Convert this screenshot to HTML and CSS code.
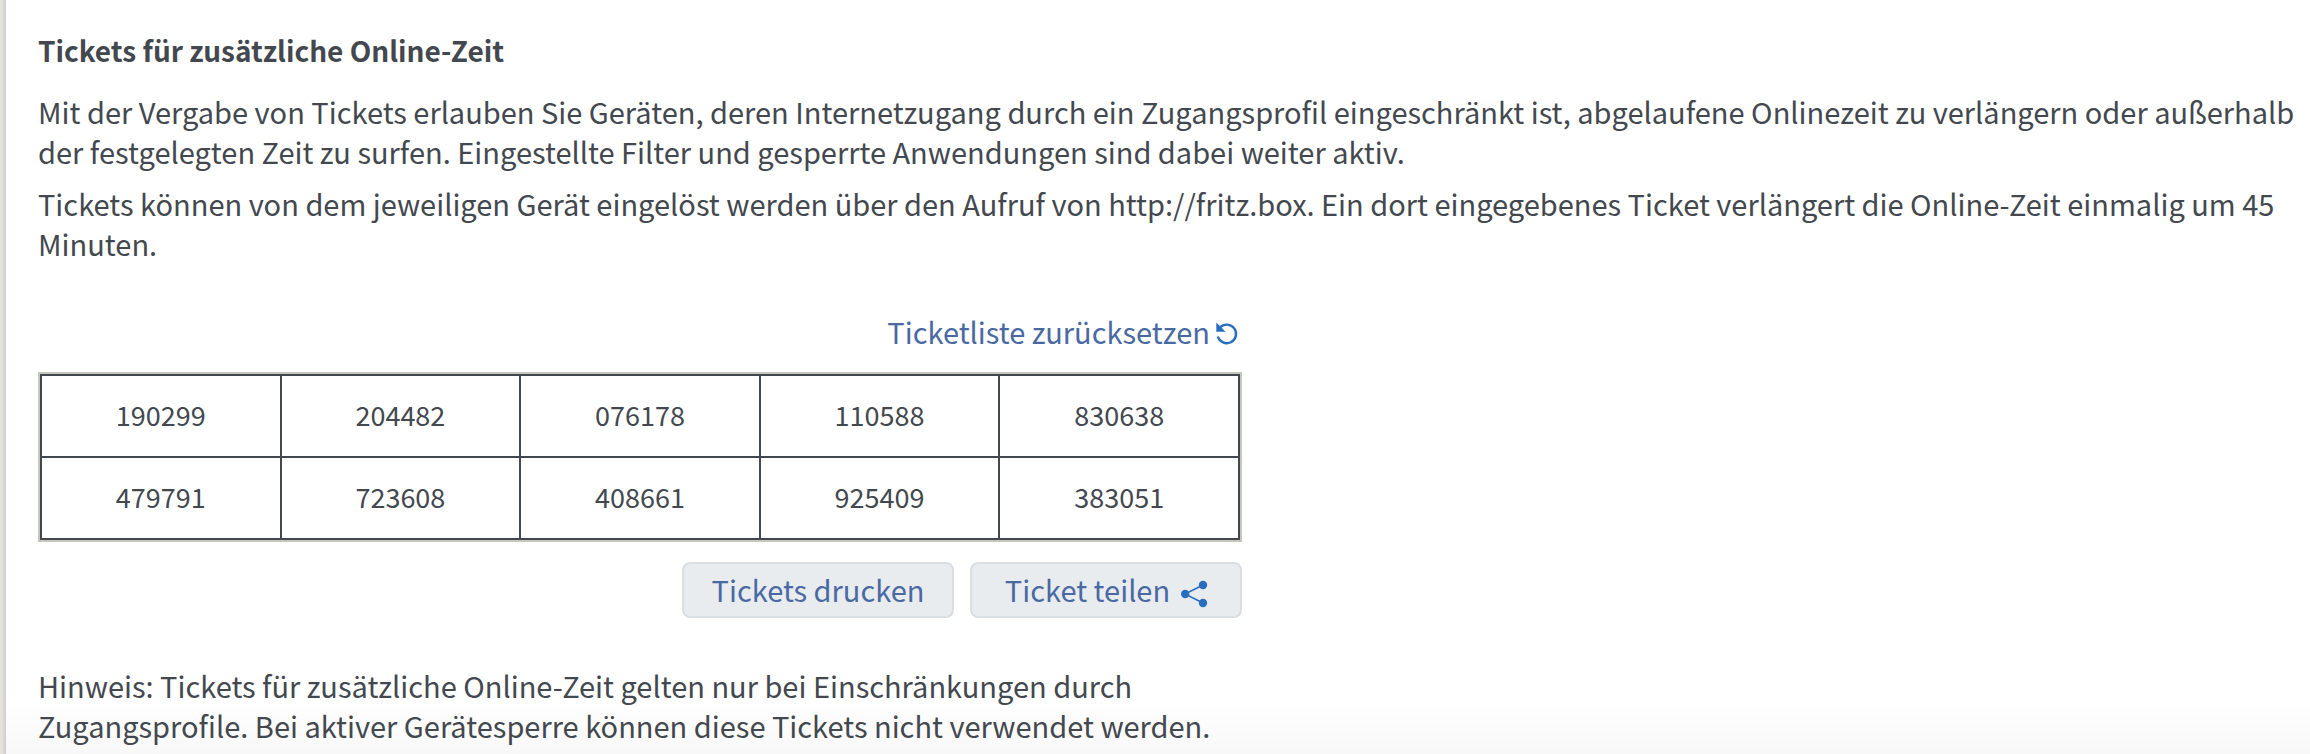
FILE: index.html
```html
<!DOCTYPE html>
<html lang="de">
<head>
<meta charset="utf-8">
<title>Tickets für zusätzliche Online-Zeit</title>
<link rel="stylesheet" href="styles.css">
</head>
<body>
<main class="panel">
  <h1 class="title">Tickets für zusätzliche Online-Zeit</h1>
  <p class="text">Mit der Vergabe von Tickets erlauben Sie Geräten, deren Internetzugang durch ein Zugangsprofil eingeschränkt ist, abgelaufene Onlinezeit zu verlängern oder außerhalb der festgelegten Zeit zu surfen. Eingestellte Filter und gesperrte Anwendungen sind dabei weiter aktiv.</p>
  <p class="text">Tickets können von dem jeweiligen Gerät eingelöst werden über den Aufruf von http://fritz.box. Ein dort eingegebenes Ticket verlängert die Online-Zeit einmalig um 45 Minuten.</p>
  <section class="tickets">
    <a class="reset" href="#">Ticketliste zurücksetzen<svg class="reset-icon" viewBox="0 0 22 22" aria-hidden="true"><path d="M4 5.500A9.300 9.300 0 1 1 1.800 14.500" fill="none" stroke="currentColor" stroke-width="2.400"/><path d="M0.300 0.500V9.800H9.600Z" fill="currentColor"/></svg></a>
    <div class="frame">
      <table class="list">
        <tr><td>190299</td><td>204482</td><td>076178</td><td>110588</td><td>830638</td></tr>
        <tr><td>479791</td><td>723608</td><td>408661</td><td>925409</td><td>383051</td></tr>
      </table>
    </div>
    <div class="actions">
      <button class="btn" type="button">Tickets drucken</button>
      <button class="btn" type="button">Ticket teilen<svg class="share-icon" viewBox="0 0 26 26" aria-hidden="true"><path d="M22 4L4 13l18 9" fill="none" stroke="currentColor" stroke-width="1.500"/><circle cx="22" cy="4" r="4.200"/><circle cx="4.200" cy="13" r="4.200"/><circle cx="22" cy="22" r="4.200"/></svg></button>
    </div>
    <p class="hint">Hinweis: Tickets für zusätzliche Online-Zeit gelten nur bei Einschränkungen durch Zugangsprofile. Bei aktiver Gerätesperre können diese Tickets nicht verwendet werden.</p>
  </section>
</main>
</body>
</html>
```
FILE: styles.css
```css
* { box-sizing: border-box; }
body {
  display: flex;
  min-height: 100vh;
  margin: 0;
  color: #43484f;
  font: 29px/40px "Source Sans Pro", "Noto Sans CJK SC", sans-serif;
}
body::before {
  content: "";
  flex: none;
  width: 6px;
  background: linear-gradient(90deg, #e4e2dd 30%, #cfcdc8);
}
.panel {
  flex: 1;
  padding: 30px 12px 0 32px;
  background: linear-gradient(0deg, #f8f8f8, #fff 56px);
}
.title { margin: 0 0 21px; font-size: 28px; font-weight: 700; }
.text { margin: 0 0 12px; }
.tickets { max-width: 1204px; margin-top: 48px; }
.reset { display: flex; justify-content: flex-end; align-items: center; padding-right: 4px; color: #4a69a2; text-decoration: none; }
.reset-icon { width: 22px; height: 22px; margin: 4px 0 0 6px; overflow: visible; color: #286ebe; }
.frame { margin-top: 21px; border: 2px solid #c6c6bc; background: #fff; }
.list { width: 100%; border-collapse: collapse; table-layout: fixed; font-size: 27px; }
.list td { height: 82px; padding: 0 0 2px; border: 2px solid #43474f; text-align: center; }
.actions { display: flex; justify-content: flex-end; gap: 16px; margin-top: 20px; }
.btn { display: flex; align-items: center; justify-content: center; width: 272px; height: 56px; padding: 0 0 2px; border: 2px solid #d9dee2; border-radius: 8px; background: #e8ecef; color: #4a69a2; font: inherit; }
.share-icon { width: 26px; height: 26px; margin: 10px 0 0 11px; overflow: visible; fill: currentColor; color: #286ebe; }
.hint { margin: 47px 0 0; }
```
